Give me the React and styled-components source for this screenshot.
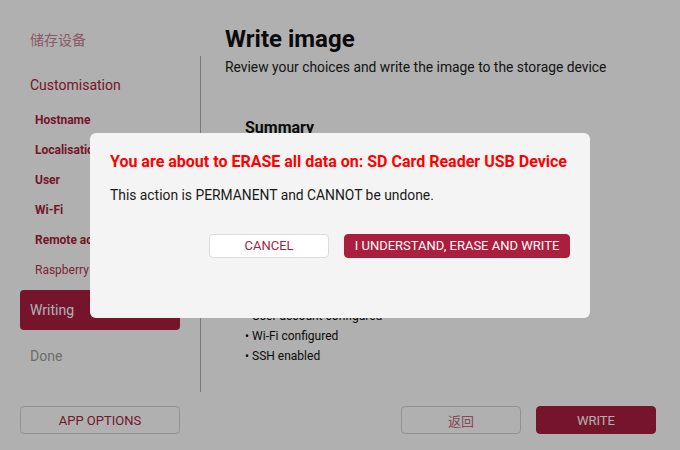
import React from "react";
import styled, { createGlobalStyle } from "styled-components";

const crimson = "#aa1e3e";

const GlobalStyle = createGlobalStyle`
  html, body {
    margin: 0;
    padding: 0;
    background: #ffffff;
  }
  body {
    font-family: Roboto, "Noto Sans CJK SC", "Liberation Sans", sans-serif;
  }
  * {
    box-sizing: border-box;
  }
`;

const Page = styled.div`
  width: 680px;
  height: 450px;
  display: flex;
  flex-direction: column;
  background: #ffffff;
  overflow: hidden;
`;

const Body = styled.div`
  flex: 1;
  display: flex;
  min-height: 0;
`;

const Sidebar = styled.nav`
  width: 160px;
  margin-left: 20px;
  padding-top: 19px;
  display: flex;
  flex-direction: column;
  gap: 6px;
`;

const Step = styled.div`
  height: 40px;
  flex-shrink: 0;
  display: flex;
  align-items: center;
  padding-left: 10px;
  border-radius: 4px;
  font-size: 14px;
  color: ${(p) => p.$color};
  background: ${(p) => (p.$active ? crimson : "transparent")};
`;

const SubList = styled.div`
  margin: -6px 0 -1px;
  display: flex;
  flex-direction: column;
`;

const SubItem = styled.div`
  height: 30px;
  display: flex;
  align-items: center;
  padding-left: 15px;
  font-size: 12px;
  font-weight: ${(p) => (p.$done ? 700 : 400)};
  color: ${(p) => (p.$done ? crimson : "#b83554")};
  white-space: nowrap;
  overflow: hidden;
`;

const Divider = styled.div`
  width: 1px;
  margin: 56px 0 0 20px;
  height: 336px;
  background: #b0b0b0;
`;

const Content = styled.main`
  flex: 1;
  padding: 25px 0 0 24px;
  color: #111;
`;

const Title = styled.h1`
  margin: 0;
  font-size: 24px;
  font-weight: 700;
  line-height: 28px;
`;

const Subtitle = styled.p`
  margin: 4px 0 0;
  font-size: 13.85px;
  line-height: 20px;
  color: #222;
`;

const Summary = styled.section`
  margin-top: 41px;
  padding-left: 20px;
`;

const SummaryTitle = styled.h2`
  margin: 0;
  font-size: 16px;
  font-weight: 700;
  line-height: 20px;
`;

const Bullets = styled.ul`
  margin: ${(p) => p.$top}px 0 0;
  padding: 0;
  list-style: none;
`;

const Bullet = styled.li`
  font-size: 12px;
  line-height: 20px;
  &::before {
    content: "•";
    margin-right: 3px;
  }
`;

const Footer = styled.footer`
  height: 58px;
  flex-shrink: 0;
  display: flex;
  align-items: flex-start;
  padding: 14px 24px 0 20px;
  gap: 15px;
`;

const Spacer = styled.div`
  flex: 1;
`;

const Button = styled.button`
  width: ${(p) => p.$width}px;
  height: ${(p) => p.$height || 28}px;
  padding: 0;
  border-radius: 4px;
  font-family: inherit;
  font-size: 13px;
  cursor: pointer;
  border: 1px solid ${(p) => (p.$primary ? crimson : p.$light ? "#dcdcdc" : "#d4d4d4")};
  background: ${(p) => (p.$primary ? crimson : p.$light ? "#ffffff" : "transparent")};
  color: ${(p) => (p.$primary ? "#ffffff" : p.$muted ? "#c46a82" : crimson)};
`;

const Overlay = styled.div`
  position: fixed;
  inset: 0;
  background: rgba(0, 0, 0, 0.31);
  display: flex;
  align-items: center;
  justify-content: center;
`;

const Dialog = styled.div`
  width: 500px;
  height: 185px;
  border-radius: 6px;
  background: #f4f4f4;
  padding: 19px 20px 0;
  display: flex;
  flex-direction: column;
`;

const DialogTitle = styled.h3`
  margin: 0;
  font-size: 16px;
  font-weight: 700;
  line-height: 20px;
  color: #ff0000;
`;

const DialogText = styled.p`
  margin: 13px 0 0;
  font-size: 13.85px;
  line-height: 20px;
  color: #1a1a1a;
`;

const DialogActions = styled.div`
  margin-top: 29px;
  display: flex;
  justify-content: flex-end;
  gap: 15px;
`;

export default function App() {
  return (
    <>
      <GlobalStyle />
      <Page>
        <Body>
          <Sidebar>
            <Step $color="#cb8399">储存设备</Step>
            <Step $color={crimson}>Customisation</Step>
            <SubList>
              <SubItem $done>Hostname</SubItem>
              <SubItem $done>Localisation</SubItem>
              <SubItem $done>User</SubItem>
              <SubItem $done>Wi-Fi</SubItem>
              <SubItem $done>Remote access</SubItem>
              <SubItem>Raspberry Pi Connect</SubItem>
            </SubList>
            <Step $active $color="#ffffff">Writing</Step>
            <Step $color="#a0a0a0">Done</Step>
          </Sidebar>
          <Divider />
          <Content>
            <Title>Write image</Title>
            <Subtitle>Review your choices and write the image to the storage device</Subtitle>
            <Summary>
              <SummaryTitle>Summary</SummaryTitle>
              <Bullets $top={8}>
                <Bullet>Device: Raspberry Pi 5</Bullet>
                <Bullet>Operating system: Raspberry Pi OS (64-bit)</Bullet>
                <Bullet>Storage: SD Card Reader USB Device</Bullet>
              </Bullets>
              <Bullets $top={60}>
                <Bullet>Hostname configured</Bullet>
                <Bullet>Localisation configured</Bullet>
                <Bullet>User account configured</Bullet>
                <Bullet>Wi-Fi configured</Bullet>
                <Bullet>SSH enabled</Bullet>
              </Bullets>
            </Summary>
          </Content>
        </Body>
        <Footer>
          <Button $width={160}>APP OPTIONS</Button>
          <Spacer />
          <Button $width={120} $muted>返回</Button>
          <Button $width={120} $primary>WRITE</Button>
        </Footer>
      </Page>
      <Overlay>
        <Dialog>
          <DialogTitle>You are about to ERASE all data on: SD Card Reader USB Device</DialogTitle>
          <DialogText>This action is PERMANENT and CANNOT be undone.</DialogText>
          <DialogActions>
            <Button $width={120} $height={24} $light>CANCEL</Button>
            <Button $width={226} $height={24} $primary>I UNDERSTAND, ERASE AND WRITE</Button>
          </DialogActions>
        </Dialog>
      </Overlay>
    </>
  );
}
